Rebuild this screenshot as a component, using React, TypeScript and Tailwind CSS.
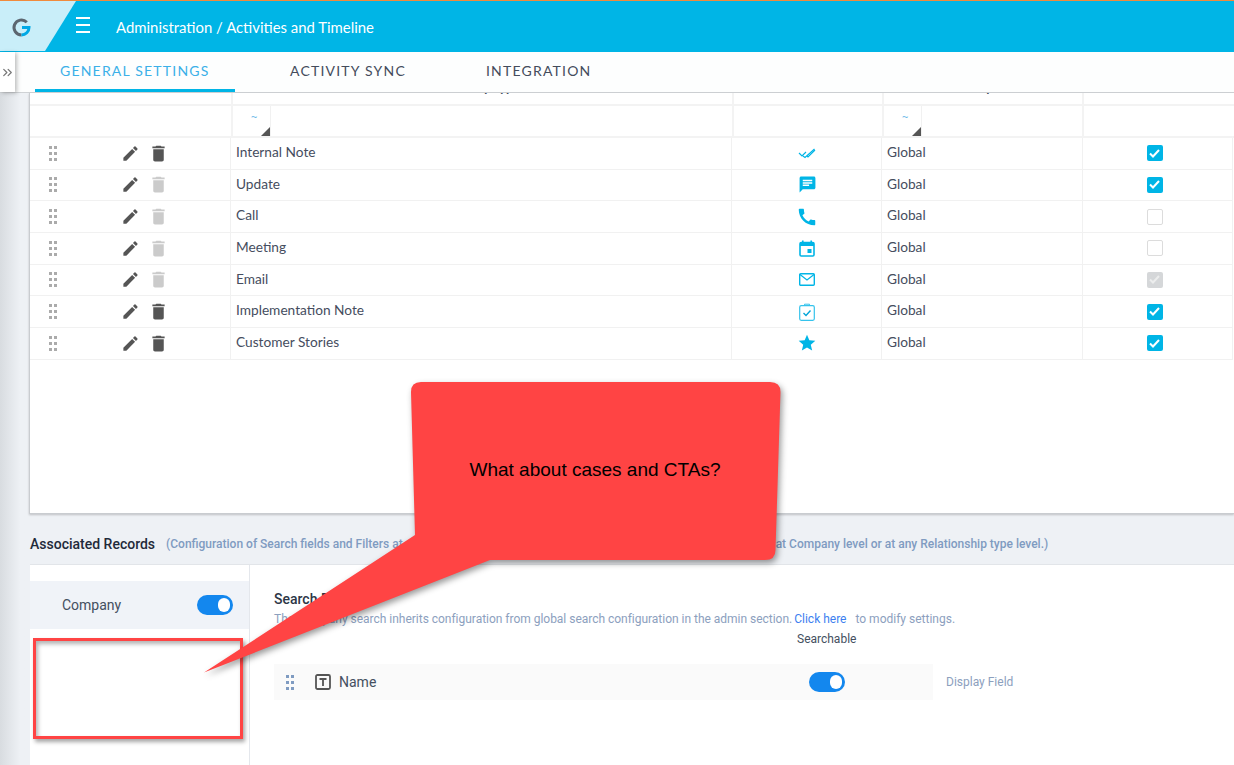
import { ChevronsRight } from "lucide-react";
import { MdCall, MdChat, MdDelete, MdEdit, MdStar } from "react-icons/md";

type RowIcon = "done" | "chat" | "call" | "event" | "mail" | "task" | "star";

interface ActivityRow {
  name: string;
  icon: RowIcon;
  canDelete: boolean;
  check: "on" | "off" | "locked";
}

const rows: ActivityRow[] = [
  { name: "Internal Note", icon: "done", canDelete: true, check: "on" },
  { name: "Update", icon: "chat", canDelete: false, check: "on" },
  { name: "Call", icon: "call", canDelete: false, check: "off" },
  { name: "Meeting", icon: "event", canDelete: false, check: "off" },
  { name: "Email", icon: "mail", canDelete: false, check: "locked" },
  { name: "Implementation Note", icon: "task", canDelete: true, check: "on" },
  { name: "Customer Stories", icon: "star", canDelete: true, check: "on" },
];

function DragDots({ className }: { className: string }) {
  return (
    <svg width="8" height="15" viewBox="0 0 8 15" className={className} fill="currentColor">
      <rect x="0" y="0" width="3" height="3" />
      <rect x="5" y="0" width="3" height="3" />
      <rect x="0" y="6" width="3" height="3" />
      <rect x="5" y="6" width="3" height="3" />
      <rect x="0" y="12" width="3" height="3" />
      <rect x="5" y="12" width="3" height="3" />
    </svg>
  );
}

function TypeIcon({ icon }: { icon: RowIcon }) {
  const cls = "text-[#00b5e6]";
  if (icon === "chat") return <MdChat size={19} className={cls} />;
  if (icon === "call") return <MdCall size={22} className={cls} />;
  if (icon === "star") return <MdStar size={20} className={cls} />;
  if (icon === "done")
    return (
      <svg width="18" height="12" viewBox="0 0 18 12" fill="none" stroke="#00b5e6" strokeWidth="1.2" className={cls}>
        <path d="M1 6l3 3 4-4" />
        <path d="M5 9l2 1.5L16.5 2" />
        <path d="M9 9l1 1 7-7" />
      </svg>
    );
  if (icon === "event")
    return (
      <svg width="16" height="17" viewBox="0 0 16 17" fill="none">
        <rect x="1" y="2.5" width="14" height="13.5" rx="1.2" stroke="#00b5e6" strokeWidth="1.6" />
        <rect x="1" y="2.5" width="14" height="3.5" fill="#00b5e6" />
        <rect x="3" y="0.5" width="1.6" height="2.5" fill="#00b5e6" />
        <rect x="11.4" y="0.5" width="1.6" height="2.5" fill="#00b5e6" />
        <rect x="8.5" y="9" width="4" height="4" fill="#00b5e6" />
      </svg>
    );
  if (icon === "mail")
    return (
      <svg width="16" height="13" viewBox="0 0 16 13" fill="none" stroke="#00b5e6">
        <rect x="0.7" y="0.7" width="14.6" height="11.6" rx="1" strokeWidth="1.4" />
        <path d="M1 1.5l7 5.5 7-5.5" strokeWidth="1.2" />
      </svg>
    );
  return (
    <svg width="16" height="18" viewBox="0 0 16 18" fill="none" stroke="#35c3ec">
      <rect x="0.7" y="2.7" width="14.6" height="14.6" rx="1.5" strokeWidth="1.2" />
      <path d="M5.5 2.7V1.2h5v1.5" strokeWidth="1" />
      <path d="M4.5 10l2.5 2.5 4.5-5" stroke="#00a5d8" strokeWidth="1.4" />
    </svg>
  );
}

function CheckCell({ state }: { state: ActivityRow["check"] }) {
  if (state === "off") {
    return <span className="block h-4 w-4 rounded-[2px] border border-[#dcdcdc] bg-white" />;
  }
  return (
    <span
      className={`flex h-4 w-4 items-center justify-center rounded-[2px] ${
        state === "on" ? "bg-[#00b5e6]" : "bg-[#d5d7d9]"
      }`}
    >
      <svg width="11" height="9" viewBox="0 0 11 9" fill="none" stroke={state === "on" ? "#fff" : "#eceded"} strokeWidth="2">
        <path d="M1 4.5l3 3 6-6.5" />
      </svg>
    </span>
  );
}

function Toggle() {
  return (
    <span className="flex h-5 w-9 items-center justify-end rounded-full bg-[#1387ee] pr-[3px]">
      <span className="block h-[14px] w-3 rounded-full bg-white" />
    </span>
  );
}

function FilterCell() {
  return (
    <div className="relative flex h-[30px] border-r-2 border-[#f3f3f3]">
      <div className="relative w-[38px] border-r border-[#f1f1f1]">
        <span className="absolute left-[18px] top-[3px] text-[11px] leading-4 text-[#6db9e8]">~</span>
        <span className="absolute bottom-0 right-0 h-0 w-0 border-b-[9px] border-l-[9px] border-b-[#555] border-l-transparent" />
      </div>
    </div>
  );
}

function ActivityTable() {
  return (
    <div className="h-[421px] overflow-hidden border-b border-l border-[#c9ccd0] bg-white shadow-[0_1px_2px_rgba(0,0,0,0.2)]">
      <div className="-mt-[20px]">
        {/* header is scrolled mostly out of view */}
        <div className="grid h-[31px] grid-cols-[203px_501px_150px_200px_150px] font-['Lato',sans-serif] text-[13px] text-[#444c5c]">
          <div className="border-r-2 border-[#f3f3f3]" />
          <div className="border-r-2 border-[#f3f3f3] pt-[5px] text-center font-bold">Activity Type</div>
          <div className="border-r-2 border-[#f3f3f3]" />
          <div className="border-r-2 border-[#f3f3f3] pt-[5px] text-center font-bold">Scope</div>
          <div />
        </div>
        <div className="grid grid-cols-[203px_501px_150px_200px_150px] border-y-2 border-[#f3f3f3]">
          <div className="border-r-2 border-[#f3f3f3]" />
          <FilterCell />
          <div className="border-r-2 border-[#f3f3f3]" />
          <FilterCell />
          <div />
        </div>
        {rows.map((row) => (
          <div
            key={row.name}
            className="grid h-[31.67px] grid-cols-[201px_501px_150px_201px_150px] font-['Lato',sans-serif] text-[13.7px] text-[#454d5e]"
          >
            <div className="flex items-center border-r border-b border-[#f1f1f1] pl-[19px]">
              <DragDots className="text-[#ababab]" />
              <MdEdit size={19} className="ml-[64px] text-[#555]" />
              <MdDelete size={21} className={`ml-[8px] ${row.canDelete ? "text-[#555]" : "text-[#cbcbcb]"}`} />
            </div>
            <div className="flex items-center border-r border-b border-[#f1f1f1] pb-[2px] pl-[5px]">{row.name}</div>
            <div className="flex items-center justify-center border-r border-b border-[#f1f1f1] pl-px">
              <TypeIcon icon={row.icon} />
            </div>
            <div className="flex items-center border-r border-b border-[#f1f1f1] pb-[2px] pl-[5px]">Global</div>
            <div className="flex items-center justify-center border-r border-b border-[#f1f1f1] pr-[6px]">
              <CheckCell state={row.check} />
            </div>
          </div>
        ))}
      </div>
    </div>
  );
}

function AssociatedRecords() {
  return (
    <div className="pl-px font-['Roboto',sans-serif]">
      <div className="flex h-[51px] items-center border-b border-[#e2e5e9] pt-[10px]">
        <span className="text-[14px] font-medium text-[#1f2a3a]">Associated Records</span>
        <span className="ml-[11px] text-[12px] font-medium text-[#7f9bc1]">(Configuration of Search fields and Filters at</span>
        <span className="ml-[373px] text-[12px] font-medium text-[#7f9bc1]">at Company level or at any Relationship type level.)</span>
      </div>
      <div className="flex h-[200px] bg-white">
        <div className="w-[220px] border-r border-[#e4e7ec] pt-4">
          <div className="flex h-[48px] items-center justify-between bg-[#f0f3f8] pl-8 pr-[16px] text-[14px] text-[#444f60]">
            <span>Company</span>
            <Toggle />
          </div>
        </div>
        <div className="flex-1 pl-6 pt-[25px]">
          <div className="text-[14px] font-medium leading-[18px] text-[#2c3646]">Search Fields</div>
          <div className="mt-[2px] flex text-[12px] leading-[18px] text-[#8ca0be]">
            <span className="tracking-[-0.02px]">
              The Company search inherits configuration from global search configuration in the admin section.
            </span>
            <span className="ml-[2px] text-[#3d7ff0]">Click here</span>
            <span className="ml-[9px]">to modify settings.</span>
          </div>
          <div className="mt-[2px] pl-[523px] text-[12px] leading-[18px] text-[#444f60]">Searchable</div>
          <div className="flex items-center">
            <div className="mt-[16px] flex h-9 w-[659px] items-center bg-[#fafafa] pl-3">
              <DragDots className="text-[#7f9bc1]" />
              <svg width="16" height="16" viewBox="0 0 16 16" fill="none" className="ml-[21px]">
                <rect x="1" y="1" width="14" height="14" rx="1.5" stroke="#555" strokeWidth="1.8" />
                <path d="M4.5 5h7M8 5v7" stroke="#555" strokeWidth="1.8" />
              </svg>
              <span className="ml-2 text-[14px] text-[#444f60]">Name</span>
              <span className="ml-[433px]">
                <Toggle />
              </span>
            </div>
            <span className="ml-[13px] mt-[16px] text-[12px] text-[#8ca0be]">Display Field</span>
          </div>
        </div>
      </div>
    </div>
  );
}

export default function App() {
  return (
    <div className="relative flex h-[765px] w-[1234px] flex-col overflow-hidden bg-[#eef1f5]">
      <div className="h-px bg-[#f08a3c]" />
      {/* top bar */}
      <header className="flex h-[51px] items-center bg-[#00b5e6] font-['Lato',sans-serif] text-white">
        <svg width="76" height="51" viewBox="0 0 76 51" className="shrink-0">
          <polygon points="0,0 76,0 45,50 0,50" fill="#c9eef9" />
          <path d="M26.8 21.2A7.5 7.5 0 1 0 21.5 34" fill="none" stroke="#5c6670" strokeWidth="3" />
          <path d="M21.5 34A7.5 7.5 0 0 0 29 26.5H22" fill="none" stroke="#00a9e6" strokeWidth="3" />
        </svg>
        <div className="-mt-[3px] flex w-[14px] shrink-0 flex-col gap-[5px]">
          <span className="h-[2px] bg-white" />
          <span className="h-[2px] bg-white" />
          <span className="h-[2px] bg-white" />
        </div>
        <div className="ml-[26px] mt-[2px] text-[14.9px]">Administration / Activities and Timeline</div>
      </header>
      {/* tabs */}
      <nav className="flex h-[41px] gap-[30px] border-b border-[#cfd2d5] bg-[#fdfefe] pl-[35px] font-['Lato',sans-serif] text-[14px] tracking-[1.2px] text-[#444c5c]">
        <div className="h-[40px] w-[200px] border-b-[3px] border-[#00b5e6] pl-[25px] pt-[8px] text-[#3bb0e8]">GENERAL SETTINGS</div>
        <div className="px-[25px] pt-[8px]">ACTIVITY SYNC</div>
        <div className="px-[25px] pt-[8px]">INTEGRATION</div>
      </nav>
      <div className="flex flex-1">
        <div className="w-[29px] shrink-0 bg-gradient-to-r from-[#d8dce0] to-[#eef1f5] to-70%" />
        <div className="flex-1">
          <ActivityTable />
          <AssociatedRecords />
        </div>
      </div>

      {/* sidebar expander */}
      <div className="absolute left-0 top-[52px] flex h-10 w-[15px] items-center justify-center bg-white shadow-[2px_1px_4px_rgba(0,0,0,0.25)]">
        <ChevronsRight size={15} className="text-[#777]" />
      </div>

      {/* annotations on top of the screenshot */}
      <div className="absolute left-[33px] top-[638px] h-[101px] w-[210px] border-[3px] border-[#ff4444] shadow-[2px_3px_4px_rgba(0,0,0,0.35),inset_2px_3px_4px_rgba(0,0,0,0.3)]" />
      <svg
        width="600"
        height="310"
        viewBox="195 375 600 310"
        className="absolute left-[195px] top-[375px] drop-shadow-[2px_3px_3px_rgba(0,0,0,0.4)]"
      >
        <path
          d="M421 382H770Q780.5 382 780.5 392L775.5 550Q775.5 560 765 560H490L204 672.5L415 535L411 392Q411 382 421 382Z"
          fill="#ff4444"
        />
      </svg>
      <div className="absolute left-[411px] top-[460px] w-[368px] text-center font-['Liberation_Sans',sans-serif] text-[19px] leading-5 text-black">
        What about cases and CTAs?
      </div>
    </div>
  );
}
